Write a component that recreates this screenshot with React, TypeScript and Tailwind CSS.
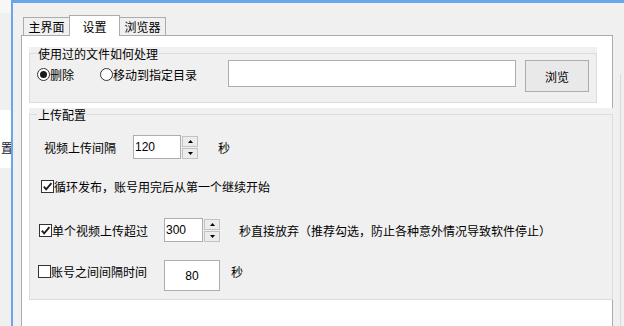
const cjk = "font-['Noto_Sans_CJK_SC','Microsoft_YaHei',sans-serif]";
const num = "font-['Liberation_Sans',Arial,sans-serif]";

const Check = ({ checked }: { checked: boolean }) => (
  <span className="flex h-[13px] w-[13px] shrink-0 items-center justify-center border border-[#333] bg-white">
    {checked && (
      <svg width="11" height="11" viewBox="0 0 11 11">
        <path d="M1.8 5.6 L4.2 8.4 L9.4 2.2" fill="none" stroke="#1a1a1a" strokeWidth="1.8" />
      </svg>
    )}
  </span>
);

const Radio = ({ checked }: { checked: boolean }) => (
  <span className="flex h-[13px] w-[13px] shrink-0 items-center justify-center rounded-full border border-[#333] bg-white">
    {checked && <span className="h-[7px] w-[7px] rounded-full bg-[#1a1a1a]" />}
  </span>
);

const Spin = () => (
  <div className="mt-[1px] flex w-[16px] flex-col gap-[1px] self-start">
    <div className="flex h-[11px] items-center justify-center border border-[#c2c2c2] bg-[#ececec]">
      <svg width="5" height="3" viewBox="0 0 5 3">
        <path d="M0 3 L2.5 0 L5 3Z" fill="#000" />
      </svg>
    </div>
    <div className="flex h-[11px] items-center justify-center border border-[#c2c2c2] bg-[#ececec]">
      <svg width="5" height="3" viewBox="0 0 5 3">
        <path d="M0 0 L5 0 L2.5 3Z" fill="#000" />
      </svg>
    </div>
  </div>
);

export default function App() {
  return (
    <div className={`flex h-[326px] w-[624px] overflow-hidden bg-[#f0f0f0] text-[12px] leading-[13px] text-black ${cjk}`}>
      {/* edge of the window behind */}
      <div className="flex w-[11px] shrink-0 flex-col">
        <div className="h-[13px] bg-[#f7f7f7]" />
        <div className="h-[97px]" />
        <div className="flex h-[58px] flex-col items-end overflow-hidden bg-white pt-[31px]">
          <span className="mr-[-2px] whitespace-nowrap text-[#1a1a3a]">置</span>
        </div>
      </div>
      <div className="w-[2px] shrink-0 bg-[#6aa6ea]" />

      <div className="flex flex-1 flex-col">
        <div className="h-[3px] bg-[#6aa6ea]" />
        <div className="flex flex-1 pl-[8px]">
          <div className="flex w-[592px] flex-col pt-[12px]">
            {/* tabs */}
            <div className="flex h-[20px] items-end pl-[2px]">
              <div className="flex h-[18px] w-[46px] items-center justify-center border-l border-t border-[#acacac] bg-[#f0f0f0]">
                主界面
              </div>
              <div className="relative z-10 mb-[-1px] flex h-[21px] w-[51px] items-center justify-center border-x border-t border-[#acacac] bg-white pt-[1px]">
                设置
              </div>
              <div className="flex h-[18px] w-[46px] items-center justify-center border-r border-t border-[#acacac] bg-[#f0f0f0]">
                浏览器
              </div>
            </div>

            {/* tab page */}
            <div className="flex flex-1 flex-col border-x border-t border-[#acacac] bg-white">
              <div className="ml-[7px] mt-[11px] h-[56px] w-[568px] bg-[#f0f0f0]">
                <fieldset className="h-[56px] border border-[#dcdcdc]">
                  <legend className="ml-[7px] px-[1px] leading-[13px]">使用过的文件如何处理</legend>
                  <div className="flex items-start pl-[7px]">
                    <label className="mt-[8px] flex h-[13px] items-center">
                      <Radio checked />
                      <span>删除</span>
                    </label>
                    <label className="ml-[26px] mt-[8px] flex h-[13px] items-center">
                      <Radio checked={false} />
                      <span>移动到指定目录</span>
                    </label>
                    <div className="ml-[31px] h-[27px] w-[288px] border border-[#abadb3] bg-white" />
                    <button className="ml-[9px] flex h-[32px] w-[64px] items-center justify-center border border-[#adadad] bg-[#e9e9e9]">
                      浏览
                    </button>
                  </div>
                </fieldset>
              </div>

              <div className="ml-[7px] mt-[5px] h-[192px] w-[584px] bg-[#f0f0f0]">
                <fieldset className="h-[192px] border border-[#dcdcdc]">
                  <legend className="ml-[7px] px-[1px] leading-[13px]">上传配置</legend>

                  <div className="mt-[14px] flex h-[24px] items-center pl-[14px]">
                    <span>视频上传间隔</span>
                    <div className={`ml-[17px] flex h-[24px] w-[48px] items-center border border-[#abadb3] bg-white pl-[1px] ${num}`}>
                      120
                    </div>
                    <div className="ml-[1px] h-[24px]">
                      <Spin />
                    </div>
                    <span className="ml-[20px]">秒</span>
                  </div>

                  <div className="mt-[20px] flex h-[14px] items-center pl-[11px]">
                    <Check checked />
                    <span>循环发布，账号用完后从第一个继续开始</span>
                  </div>

                  <div className="mt-[25px] flex h-[24px] items-center pl-[9px]">
                    <Check checked />
                    <span>单个视频上传超过</span>
                    <div className={`ml-[16px] flex h-[24px] w-[39px] items-center border border-[#abadb3] bg-white pl-[1px] ${num}`}>
                      300
                    </div>
                    <div className="ml-[1px] h-[24px]">
                      <Spin />
                    </div>
                    <span className="ml-[19px]">秒直接放弃（推荐勾选，防止各种意外情况导致软件停止）</span>
                  </div>

                  <div className="mt-[18px] flex h-[31px] items-start pl-[8px]">
                    <div className="mt-[5px] flex h-[13px] items-center">
                      <Check checked={false} />
                      <span>账号之间间隔时间</span>
                    </div>
                    <div className={`ml-[17px] flex h-[31px] w-[56px] items-center justify-center border border-[#abadb3] bg-white pt-[2px] ${num}`}>
                      80
                    </div>
                    <span className="ml-[11px] mt-[5px]">秒</span>
                  </div>
                </fieldset>
              </div>
            </div>
          </div>
          <div className="w-[7px] shrink-0" />
          <div className="mt-[71px] w-[1px] shrink-0 bg-[#dadada]" />
        </div>
      </div>
    </div>
  );
}
